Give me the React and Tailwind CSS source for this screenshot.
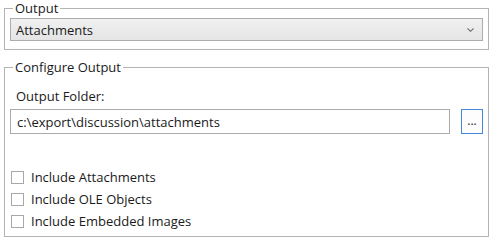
import React, { useState } from 'react';

const CheckRow = ({ label, checked, onChange }) => (
  <label className="flex items-center h-[22px] gap-[7px] pl-[1px] cursor-default">
    <span
      onClick={onChange}
      className="w-[13px] h-[13px] border border-[#a8a8a8] bg-white flex items-center justify-center"
    >
      {checked && (
        <svg width="9" height="9" viewBox="0 0 9 9">
          <path d="M1 4.5l2.3 2.3L8 1.8" fill="none" stroke="#333" strokeWidth="1.4" />
        </svg>
      )}
    </span>
    <span>{label}</span>
  </label>
);

const App = () => {
  const [checks, setChecks] = useState([false, false, false]);

  const toggle = (i) => {
    const next = [...checks];
    next[i] = !next[i];
    setChecks(next);
  };

  return (
    <div className="w-[494px] h-[244px] bg-white text-[13px] leading-[16px] text-[#1a1a1a] font-['Open_Sans',sans-serif]">
      {/* Output group */}
      <fieldset className="ml-[4px] mr-[5px] border border-[#b4b4b4] px-[5px] pb-[8px]">
        <legend className="ml-[3px] px-[2px]">Output</legend>
        <div className="mt-[2px] h-[23px] flex items-center justify-between border border-[#acacac] bg-gradient-to-b from-[#f0f0f0] to-[#e5e5e5] pl-[5px] pr-[8px]">
          <span>Attachments</span>
          <svg width="7" height="4" viewBox="0 0 7 4">
            <path d="M0.5 0.5L3.5 3.3L6.5 0.5" fill="none" stroke="#707070" strokeWidth="1.1" />
          </svg>
        </div>
      </fieldset>

      {/* Configure Output group */}
      <fieldset className="mt-[9px] ml-[4px] mr-[5px] border border-[#b4b4b4] px-[5px] pb-[4px]">
        <legend className="ml-[3px] px-[2px]">Configure Output</legend>
        <div className="mt-[13px] pl-[6px]">Output Folder:</div>
        <div className="mt-[5px] flex items-center gap-[11px]">
          <div className="flex-1 h-[25px] flex items-center border border-[#ababab] bg-white pl-[6px]">
            c:\export\discussion\attachments
          </div>
          <button
            type="button"
            className="w-[22px] h-[25px] border border-[#3d8ad6] bg-[#fdfdfd] flex items-end justify-center pb-[6px] leading-none text-[12px]"
          >
            ...
          </button>
        </div>
        <div className="mt-[32px] flex flex-col">
          <CheckRow label="Include Attachments" checked={checks[0]} onChange={() => toggle(0)} />
          <CheckRow label="Include OLE Objects" checked={checks[1]} onChange={() => toggle(1)} />
          <CheckRow label="Include Embedded Images" checked={checks[2]} onChange={() => toggle(2)} />
        </div>
      </fieldset>
    </div>
  );
};

export default App;
